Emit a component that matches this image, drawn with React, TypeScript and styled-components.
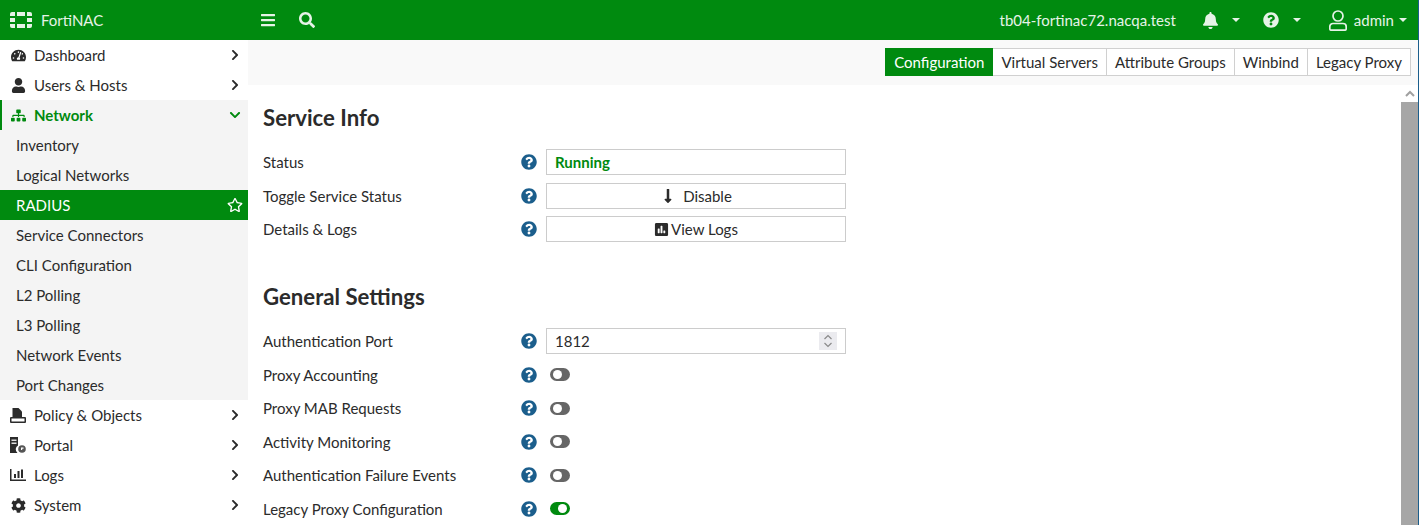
import React from 'react';
import styled, { createGlobalStyle } from 'styled-components';
import {
  FaBars,
  FaBell,
  FaChevronDown,
  FaChevronRight,
  FaCog,
  FaLongArrowAltDown,
  FaPoll,
  FaQuestionCircle,
  FaRegStar,
  FaSearch,
  FaSitemap,
  FaTachometerAlt,
  FaUser,
} from 'react-icons/fa';

const GREEN = '#008a0f';
const TEXT = '#2b2b2b';

const GlobalStyle = createGlobalStyle`
  html, body {
    margin: 0;
    height: 100%;
    overflow: hidden;
    background: #fff;
    font-family: Lato, "Liberation Sans", sans-serif;
    font-size: 15px;
    color: ${TEXT};
  }
  * { box-sizing: border-box; }
`;

const Page = styled.div`
  display: flex;
  flex-direction: column;
  height: 525px;
  border-right: 1px solid #1b5e8c;
  overflow: hidden;
`;

const TopBar = styled.header`
  flex: 0 0 40px;
  display: flex;
  align-items: center;
  background: ${GREEN};
  color: #e6f3e7;
`;

const Brand = styled.div`
  width: 248px;
  display: flex;
  align-items: center;
  gap: 9px;
  padding-left: 10px;
`;

const BarIcons = styled.div`
  display: flex;
  align-items: center;
  gap: 23px;
  padding-left: 12px;
  font-size: 16px;
`;

const BarRight = styled.div`
  margin-left: auto;
  display: flex;
  align-items: center;
  padding-right: 11px;
`;

const Host = styled.span`
  margin-right: 26px;
`;

const Caret = styled.span`
  width: 0;
  height: 0;
  border-left: 4px solid transparent;
  border-right: 4px solid transparent;
  border-top: 4px solid #e6f3e7;
`;

const BarMenu = styled.div<{ $gap: number; $after: number; $size?: number }>`
  display: flex;
  align-items: center;
  gap: ${(p) => p.$gap}px;
  margin-right: ${(p) => p.$after}px;
  font-size: ${(p) => p.$size ?? 15}px;
`;

const UserName = styled.span`
  margin-left: 2px;
`;

const Body = styled.div`
  flex: 1;
  display: flex;
  min-height: 0;
`;

const Side = styled.nav`
  flex: 0 0 248px;
  display: flex;
  flex-direction: column;
`;

const NavRow = styled.div<{ $open?: boolean }>`
  height: 30px;
  display: flex;
  align-items: center;
  padding: 0 7px 0 ${(p) => (p.$open ? 8 : 10)}px;
  gap: 8px;
  ${(p) =>
    p.$open
      ? `background: #f4f4f4; color: ${GREEN}; font-weight: 700; border-left: 2px solid ${GREEN};`
      : ''}
`;

const NavIcon = styled.span`
  width: 16px;
  display: flex;
  justify-content: center;
  align-items: center;
  font-size: 15px;
`;

const NavLabel = styled.span`
  flex: 1;
`;

const Chevron = styled.span`
  width: 12px;
  font-size: 12px;
  display: flex;
  justify-content: center;
`;

const SubRow = styled.div<{ $active?: boolean }>`
  height: 30px;
  display: flex;
  align-items: center;
  justify-content: space-between;
  padding: 0 5px 0 16px;
  background: ${(p) => (p.$active ? GREEN : '#f4f4f4')};
  color: ${(p) => (p.$active ? '#fff' : TEXT)};
  font-size: 15px;
`;

const Content = styled.main`
  flex: 1;
  min-width: 0;
  display: flex;
  flex-direction: column;
`;

const TabBar = styled.div`
  flex: 0 0 45px;
  display: flex;
  justify-content: flex-end;
  padding: 8px 7px 0 0;
  background: #f9f9f9;
`;

const Tab = styled.div<{ $active?: boolean }>`
  height: 28px;
  padding: 0 8px;
  display: flex;
  align-items: center;
  border: 1px solid ${(p) => (p.$active ? GREEN : '#d0d0d0')};
  border-left-width: ${(p) => (p.$active ? 1 : 0)}px;
  background: ${(p) => (p.$active ? GREEN : '#fff')};
  color: ${(p) => (p.$active ? '#fff' : TEXT)};
`;

const Scroller = styled.div`
  flex: 1;
  display: flex;
  min-height: 0;
`;

const Form = styled.div`
  flex: 1;
  padding: 19px 0 0 15px;
`;

const Heading = styled.h2<{ $top?: number; $bottom: number }>`
  margin: ${(p) => p.$top ?? 0}px 0 ${(p) => p.$bottom}px;
  height: 28px;
  line-height: 28px;
  font-size: 22.2px;
  font-weight: 700;
`;

const Row = styled.div`
  height: 33.5px;
  display: grid;
  grid-template-columns: 258px 25px 300px;
  align-items: center;
`;

const HelpMark = styled.span`
  display: flex;
  color: #1b5e8c;
  font-size: 16px;
`;

const Field = styled.div`
  height: 26px;
  border: 1px solid #ccc;
  display: flex;
  align-items: center;
  padding: 0 8px;
`;

const StatusValue = styled(Field)`
  color: ${GREEN};
  font-weight: 700;
`;

const ActionButton = styled(Field)<{ $gap: number }>`
  justify-content: center;
  gap: ${(p) => p.$gap}px;
`;

const NumberValue = styled(Field)`
  justify-content: space-between;
  padding-right: 8px;
`;

const Spinner = styled.span`
  width: 18px;
  height: 18px;
  background: #ebebef;
  display: flex;
  align-items: center;
  justify-content: center;
`;

const Toggle = styled.span<{ $on?: boolean }>`
  width: 20px;
  height: 13px;
  margin-left: 4px;
  border-radius: 7px;
  padding: 2px 3px;
  display: flex;
  justify-content: ${(p) => (p.$on ? 'flex-end' : 'flex-start')};
  background: ${(p) => (p.$on ? GREEN : '#666')};
`;

const Knob = styled.span`
  width: 9px;
  height: 9px;
  border-radius: 50%;
  background: #fff;
`;

const ScrollBar = styled.div`
  flex: 0 0 17px;
  display: flex;
  flex-direction: column;
  background: #f1f1f1;
`;

const ScrollArrow = styled.div`
  height: 17px;
  background: #fff;
  display: flex;
  align-items: center;
  justify-content: center;
`;

const ScrollThumb = styled.div`
  flex: 1;
  background: #a6a6a6;
`;

const Logo = () => (
  <svg width="22" height="16" viewBox="0 0 22 16" fill="currentColor">
    <path d="M7 0h8v4H7zM7 12h8v4H7zM0 6h5v4H0zM17 6h5v4h-5zM0 4V2a2 2 0 0 1 2-2h3v4zM17 0h3a2 2 0 0 1 2 2v2h-5zM0 12h5v4H2a2 2 0 0 1-2-2zM17 12h5v2a2 2 0 0 1-2 2h-3z" />
  </svg>
);

const UserOutline = () => (
  <svg width="18" height="21" viewBox="0 0 18 21" fill="none" stroke="currentColor" strokeWidth="1.7">
    <circle cx="9" cy="6" r="5" />
    <path d="M4 13.500h10a3.200 3.200 0 0 1 3.200 3.200v2a1.500 1.500 0 0 1-1.500 1.500H2.300a1.500 1.500 0 0 1-1.500-1.500v-2A3.200 3.200 0 0 1 4 13.500z" />
  </svg>
);

const PolicyIcon = () => (
  <svg width="16" height="15" viewBox="0 0 16 15" fill="currentColor">
    <path d="M2.500 0H8.500L12 3.500V9H2.500z" />
    <path d="M1 9h14a1 1 0 0 1 1 1v4a1 1 0 0 1-1 1H1a1 1 0 0 1-1-1v-4a1 1 0 0 1 1-1zM1.500 10.500v3h13v-3z" fillRule="evenodd" />
  </svg>
);

const PortalIcon = () => (
  <svg width="16" height="16" viewBox="0 0 16 16">
    <path fill="currentColor" d="M0 0h8v8.500A4.500 4.500 0 0 0 7.500 16H0z" />
    <path fill="#ddd" d="M1.500 2.500h5V4h-5zM1.500 5.500h5V7h-5z" />
    <circle cx="12" cy="12" r="3.800" fill="#555" />
    <path fill="#fff" d="M11 10.500h2.500v1.200h-1.300v1.300H11z" />
  </svg>
);

const LogsIcon = () => (
  <svg width="16" height="12" viewBox="0 0 16 12" fill="currentColor">
    <path d="M0 0h1.500v10.500H16V12H0z" />
    <path d="M4 5h2v4H4zM7.500 2h2v7h-2zM11 .5h2V9h-2z" />
  </svg>
);

const SpinnerArrows = () => (
  <svg width="10" height="14" viewBox="0 0 10 14" fill="none" stroke="#8a8a8a" strokeWidth="1.2">
    <path d="M1.500 5l3.500-3.500L8.500 5M1.500 9l3.500 3.500L8.500 9" />
  </svg>
);

const ScrollUp = () => (
  <svg width="10" height="7" viewBox="0 0 10 7" fill="none" stroke="#a0a0a0" strokeWidth="2">
    <path d="M1 6l4-4 4 4" />
  </svg>
);

const NavItem = ({ icon, label }: { icon: React.ReactNode; label: string }) => (
  <NavRow>
    <NavIcon>{icon}</NavIcon>
    <NavLabel>{label}</NavLabel>
    <Chevron>
      <FaChevronRight />
    </Chevron>
  </NavRow>
);

const FormRow = ({ label, children }: { label: string; children: React.ReactNode }) => (
  <Row>
    <span>{label}</span>
    <HelpMark>
      <FaQuestionCircle />
    </HelpMark>
    {children}
  </Row>
);

const subItems = [
  'Inventory',
  'Logical Networks',
  'RADIUS',
  'Service Connectors',
  'CLI Configuration',
  'L2 Polling',
  'L3 Polling',
  'Network Events',
  'Port Changes',
];

const tabs = ['Configuration', 'Virtual Servers', 'Attribute Groups', 'Winbind', 'Legacy Proxy'];

const toggles = [
  { label: 'Proxy Accounting', on: false },
  { label: 'Proxy MAB Requests', on: false },
  { label: 'Activity Monitoring', on: false },
  { label: 'Authentication Failure Events', on: false },
  { label: 'Legacy Proxy Configuration', on: true },
];

function App() {
  return (
    <Page>
      <GlobalStyle />
      <TopBar>
        <Brand>
          <Logo />
          <span>FortiNAC</span>
        </Brand>
        <BarIcons>
          <FaBars />
          <FaSearch />
        </BarIcons>
        <BarRight>
          <Host>tb04-fortinac72.nacqa.test</Host>
          <BarMenu $gap={13} $after={23} $size={17}>
            <FaBell />
            <Caret />
          </BarMenu>
          <BarMenu $gap={14} $after={28} $size={16}>
            <FaQuestionCircle />
            <Caret />
          </BarMenu>
          <BarMenu $gap={5} $after={0}>
            <UserOutline />
            <UserName>admin</UserName>
            <Caret />
          </BarMenu>
        </BarRight>
      </TopBar>
      <Body>
        <Side>
          <NavItem icon={<FaTachometerAlt />} label="Dashboard" />
          <NavItem icon={<FaUser />} label="Users & Hosts" />
          <NavRow $open>
            <NavIcon>
              <FaSitemap />
            </NavIcon>
            <NavLabel>Network</NavLabel>
            <Chevron>
              <FaChevronDown />
            </Chevron>
          </NavRow>
          {subItems.map((item) => (
            <SubRow key={item} $active={item === 'RADIUS'}>
              {item}
              {item === 'RADIUS' && <FaRegStar size={16} />}
            </SubRow>
          ))}
          <NavItem icon={<PolicyIcon />} label="Policy & Objects" />
          <NavItem icon={<PortalIcon />} label="Portal" />
          <NavItem icon={<LogsIcon />} label="Logs" />
          <NavItem icon={<FaCog />} label="System" />
        </Side>
        <Content>
          <TabBar>
            {tabs.map((tab) => (
              <Tab key={tab} $active={tab === 'Configuration'}>
                {tab}
              </Tab>
            ))}
          </TabBar>
          <Scroller>
            <Form>
              <Heading $bottom={13.3}>Service Info</Heading>
              <FormRow label="Status">
                <StatusValue>Running</StatusValue>
              </FormRow>
              <FormRow label="Toggle Service Status">
                <ActionButton $gap={7}>
                  <FaLongArrowAltDown size={16} />
                  Disable
                </ActionButton>
              </FormRow>
              <FormRow label="Details & Logs">
                <ActionButton $gap={2}>
                  <FaPoll size={15} />
                  View Logs
                </ActionButton>
              </FormRow>
              <Heading $top={37} $bottom={13.7}>General Settings</Heading>
              <FormRow label="Authentication Port">
                <NumberValue>
                  1812
                  <Spinner>
                    <SpinnerArrows />
                  </Spinner>
                </NumberValue>
              </FormRow>
              {toggles.map((t) => (
                <FormRow key={t.label} label={t.label}>
                  <Toggle $on={t.on}>
                    <Knob />
                  </Toggle>
                </FormRow>
              ))}
            </Form>
            <ScrollBar>
              <ScrollArrow>
                <ScrollUp />
              </ScrollArrow>
              <ScrollThumb />
            </ScrollBar>
          </Scroller>
        </Content>
      </Body>
    </Page>
  );
}

export default App;
